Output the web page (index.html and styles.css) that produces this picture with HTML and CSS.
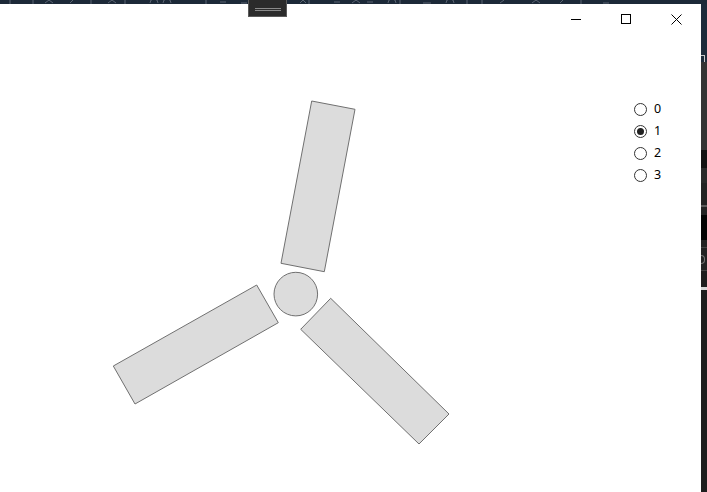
FILE: index.html
```html
<!DOCTYPE html>
<html>
<head>
<meta charset="utf-8">
<link rel="stylesheet" href="styles.css">
</head>
<body>
<div class="desk">
  <div class="topbar">
    <svg class="topicons" width="707" height="4" viewBox="0 0 707 4">
      <g stroke="#5a6472" stroke-width="1" fill="none">
        <path d="M10 0v4M33 0v4M45 3l4-3 4 3M70 3l3-3M91 0v4M108 3l4-3 4 3M125 0v4M150 3a4 4 0 0 1 8 0M163 3a4 4 0 0 1 8 0M206 0v4M220 2h6M241 3h6M300 3l3-3 3 3M309 0v4M334 2h6M352 3l4-3 4 3M367 2h6M388 3a4 4 0 0 1 8 0M400 0v4M423 3h8M446 3a4 4 0 0 1 8 0M467 0v4M482 0v4M500 3l4-3M532 3l4-3 4 3M560 3l3-3M581 0v4M603 3h6"/>
      </g>
    </svg>
  </div>
  <div class="handle"><span class="hline"></span><span class="hline"></span></div>
  <div class="main">
    <div class="window">
      <div class="titlebar">
        <div class="tbtn">
          <svg width="10" height="10" viewBox="0 0 10 10"><path d="M0 5.5h10" stroke="#000" stroke-width="1"/></svg>
        </div>
        <div class="tbtn">
          <svg width="10" height="10" viewBox="0 0 10 10"><rect x="0.5" y="0.5" width="9" height="9" fill="none" stroke="#000" stroke-width="1"/></svg>
        </div>
        <div class="tbtn">
          <svg width="11" height="11" viewBox="0 0 11 11"><path d="M0.5 0.5l10 10M10.5 0.5l-10 10" stroke="#000" stroke-width="1"/></svg>
        </div>
      </div>
      <div class="content">
        <svg class="fan" width="634" height="454" viewBox="0 34 634 454">
          <g fill="#dcdcdc" stroke="#707070" stroke-width="1">
            <polygon points="311.7,101 355,109.3 324.3,271.7 281,263.3"/>
            <polygon points="256.7,285 278.3,322.7 135,404 113.3,366"/>
            <polygon points="330.7,298.3 449,414 419,444 300.7,329.3"/>
            <circle cx="295.8" cy="294.1" r="21.8"/>
          </g>
        </svg>
        <div class="radios">
          <div class="radio"><span class="bullet"></span><span class="label">0</span></div>
          <div class="radio"><span class="bullet checked"></span><span class="label">1</span></div>
          <div class="radio"><span class="bullet"></span><span class="label">2</span></div>
          <div class="radio"><span class="bullet"></span><span class="label">3</span></div>
        </div>
      </div>
    </div>
    <div class="strip">
      <div class="seg s-navy"><span class="sicon"></span></div>
      <div class="seg s-gray"></div>
      <div class="seg s-black1"></div>
      <div class="seg s-g2"></div>
      <div class="seg s-g3"></div>
      <div class="seg s-line"></div>
      <div class="seg s-g4"></div>
      <div class="seg s-black2"></div>
      <div class="seg s-g5"></div>
      <div class="seg s-line2"></div>
      <div class="seg s-g6"><span class="sletter"></span></div>
      <div class="seg s-line2"></div>
      <div class="seg s-g7"></div>
      <div class="seg s-white"></div>
      <div class="seg s-rest"></div>
    </div>
  </div>
</div>
</body>
</html>
```

FILE: styles.css
```css
html, body {
  margin: 0;
  padding: 0;
}
body {
  width: 707px;
  height: 492px;
  overflow: hidden;
  background: #1e1e1e;
  font-family: "Noto Sans", "Open Sans", "DejaVu Sans", sans-serif;
}
.desk {
  position: relative;
  display: flex;
  flex-direction: column;
  width: 707px;
  height: 492px;
}
.topbar {
  height: 4px;
  background: #1c2938;
  flex: none;
}
.topicons {
  display: block;
}
.handle {
  position: absolute;
  left: 248px;
  top: 0;
  width: 37px;
  height: 14px;
  background: #2b2b2b;
  border: 1px solid #5a5a5a;
  border-top: none;
  display: flex;
  flex-direction: column;
  align-items: center;
  justify-content: center;
  gap: 1px;
  padding-top: 2px;
}
.hline {
  display: block;
  width: 26px;
  height: 1px;
  background: #8a8a8a;
}
.main {
  display: flex;
  flex: 1;
}
.window {
  width: 701px;
  background: #fff;
  display: flex;
  flex-direction: column;
}
.titlebar {
  height: 30px;
  display: flex;
  justify-content: flex-end;
  flex: none;
}
.tbtn {
  width: 50px;
  height: 30px;
  display: flex;
  align-items: center;
  justify-content: center;
}
.tbtn svg {
  display: block;
}
.content {
  display: flex;
  flex: 1;
}
.fan {
  display: block;
  flex: none;
}
.radios {
  padding-top: 64px;
  display: flex;
  flex-direction: column;
}
.radio {
  height: 22px;
  display: flex;
  align-items: center;
}
.bullet {
  width: 11px;
  height: 11px;
  border: 1px solid #333;
  border-radius: 50%;
  background: #fff;
  display: flex;
  align-items: center;
  justify-content: center;
  flex: none;
}
.bullet.checked::after {
  content: "";
  width: 7px;
  height: 7px;
  border-radius: 50%;
  background: #212121;
}
.label {
  margin-left: 7px;
  font-size: 12.5px;
  line-height: 14px;
  color: #000;
}
.strip {
  width: 6px;
  display: flex;
  flex-direction: column;
}
.seg {
  flex: none;
  position: relative;
  overflow: hidden;
}
.s-navy { height: 58px; background: #1d2b3b; }
.sicon {
  position: absolute;
  left: 0;
  top: 51px;
  width: 3px;
  height: 9px;
  border: 1px solid #c8c8c8;
  border-left: none;
}
.s-gray { height: 88px; background: #343434; }
.s-black1 { height: 18px; background: #121212; }
.s-g2 { height: 15px; background: #2a2a2a; }
.s-g3 { height: 22px; background: #232323; }
.s-line { height: 2px; background: #5c5c5c; }
.s-g4 { height: 8px; background: #232323; }
.s-black2 { height: 25px; background: #030303; }
.s-g5 { height: 7px; background: #232323; }
.s-line2 { height: 1px; background: #444; }
.s-g6 { height: 22px; background: #232323; }
.sletter {
  position: absolute;
  left: 0;
  top: 7px;
  width: 3px;
  height: 7px;
  border: 1px solid #777;
  border-left: none;
  border-radius: 0 4px 4px 0;
}
.s-g7 { height: 16px; background: #1e1e1e; }
.s-white { height: 3px; background: #d8d8d8; }
.s-rest { flex: 1; background: #1e1e1e; }
```
